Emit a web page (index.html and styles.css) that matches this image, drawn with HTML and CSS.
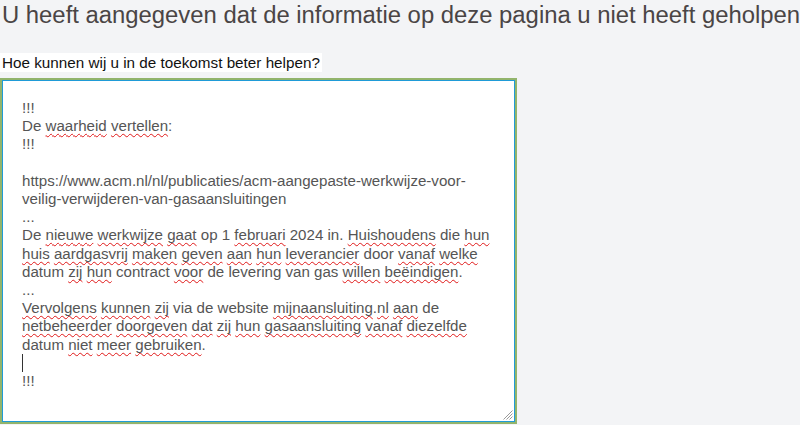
FILE: index.html
```html
<!DOCTYPE html>
<html lang="nl">
<head>
<meta charset="utf-8">
<link rel="stylesheet" href="styles.css">
</head>
<body>
<main class="page">
  <h1 class="title">U heeft aangegeven dat de informatie op deze pagina u niet heeft geholpen</h1>
  <label class="label">Hoe kunnen wij u in de toekomst beter helpen?</label>
  <div class="textarea" role="textbox" aria-multiline="true">
    <div class="line">!!!</div>
    <div class="line">De <span class="sp">waarheid</span> <span class="sp">vertellen</span>:</div>
    <div class="line">!!!</div>
    <div class="line">&nbsp;</div>
    <div class="line">https://www.acm.nl/nl/publicaties/acm-aangepaste-werkwijze-voor-veilig-verwijderen-van-gasaansluitingen</div>
    <div class="line">...</div>
    <div class="line">De <span class="sp">nieuwe</span> <span class="sp">werkwijze</span> <span class="sp">gaat</span> op 1 <span class="sp">februari</span> 2024 in. <span class="sp">Huishoudens</span> die <span class="sp">hun</span> <span class="sp">huis</span> <span class="sp">aardgasvrij</span> <span class="sp">maken</span> <span class="sp">geven</span> <span class="sp">aan</span> <span class="sp">hun</span> <span class="sp">leverancier</span> door <span class="sp">vanaf</span> <span class="sp">welke</span> datum <span class="sp">zij</span> <span class="sp">hun</span> contract <span class="sp">voor</span> de levering van gas <span class="sp">willen</span> <span class="sp">beëindigen</span>.</div>
    <div class="line">...</div>
    <div class="line"><span class="sp">Vervolgens</span> <span class="sp">kunnen</span> <span class="sp">zij</span> via de website <span class="sp">mijnaansluiting</span>.<span class="sp">nl</span> <span class="sp">aan</span> de <span class="sp">netbeheerder</span> <span class="sp">doorgeven</span> <span class="sp">dat</span> <span class="sp">zij</span> <span class="sp">hun</span> <span class="sp">gasaansluiting</span> <span class="sp">vanaf</span> <span class="sp">diezelfde</span> datum <span class="sp">niet</span> <span class="sp">meer</span> <span class="sp">gebruiken</span>.</div>
    <div class="line"><span class="caret"></span></div>
    <div class="line">!!!</div>
    <svg class="grip" width="12" height="12" viewBox="0 0 12 12" aria-hidden="true">
      <path d="M11.5 2.5 L2.5 11.5 M11.5 5.5 L5.5 11.5 M11.5 8.5 L8.5 11.5" stroke="#9a9a9a" stroke-width="1" fill="none"/>
    </svg>
  </div>
</main>
</body>
</html>
```
FILE: styles.css
```css
html, body {
  margin: 0;
  padding: 0;
  background: #f3f4f6;
}
.page {
  display: flex;
  flex-direction: column;
  align-items: flex-start;
  padding: 0 0 0 2px;
  font-family: "Liberation Sans", Arial, sans-serif;
}
.title {
  margin: 0;
  padding-top: 1px;
  font-size: 23.85px;
  line-height: 28px;
  font-weight: normal;
  color: #4a4545;
  white-space: nowrap;
}
.label {
  margin-top: 24px;
  margin-left: -2px;
  padding: 1px 2px;
  background: #ffffff;
  font-size: 15.25px;
  line-height: 17px;
  color: #111;
}
.textarea {
  position: relative;
  box-sizing: border-box;
  margin-top: 6px;
  margin-left: -2px;
  width: 517px;
  height: 346px;
  padding: 19px 16px 19px 20px;
  background: #fff;
  border: 2px solid #92b46c;
  box-shadow: inset 0 0 0 1px #1f9bd7, inset -1px -1px 0 0 #1f9bd7;
  font-size: 15.1px;
  line-height: 18.2px;
  color: #555;
  overflow: hidden;
}
.line {
  min-height: 18.2px;
}
.sp {
  text-decoration: underline wavy #e01818;
  text-decoration-thickness: 1px;
  text-underline-offset: 2px;
  text-decoration-skip-ink: none;
}
.caret {
  display: inline-block;
  width: 1px;
  height: 18px;
  background: #333;
  vertical-align: top;
}
.grip {
  position: absolute;
  right: 2px;
  bottom: 2px;
}
```
